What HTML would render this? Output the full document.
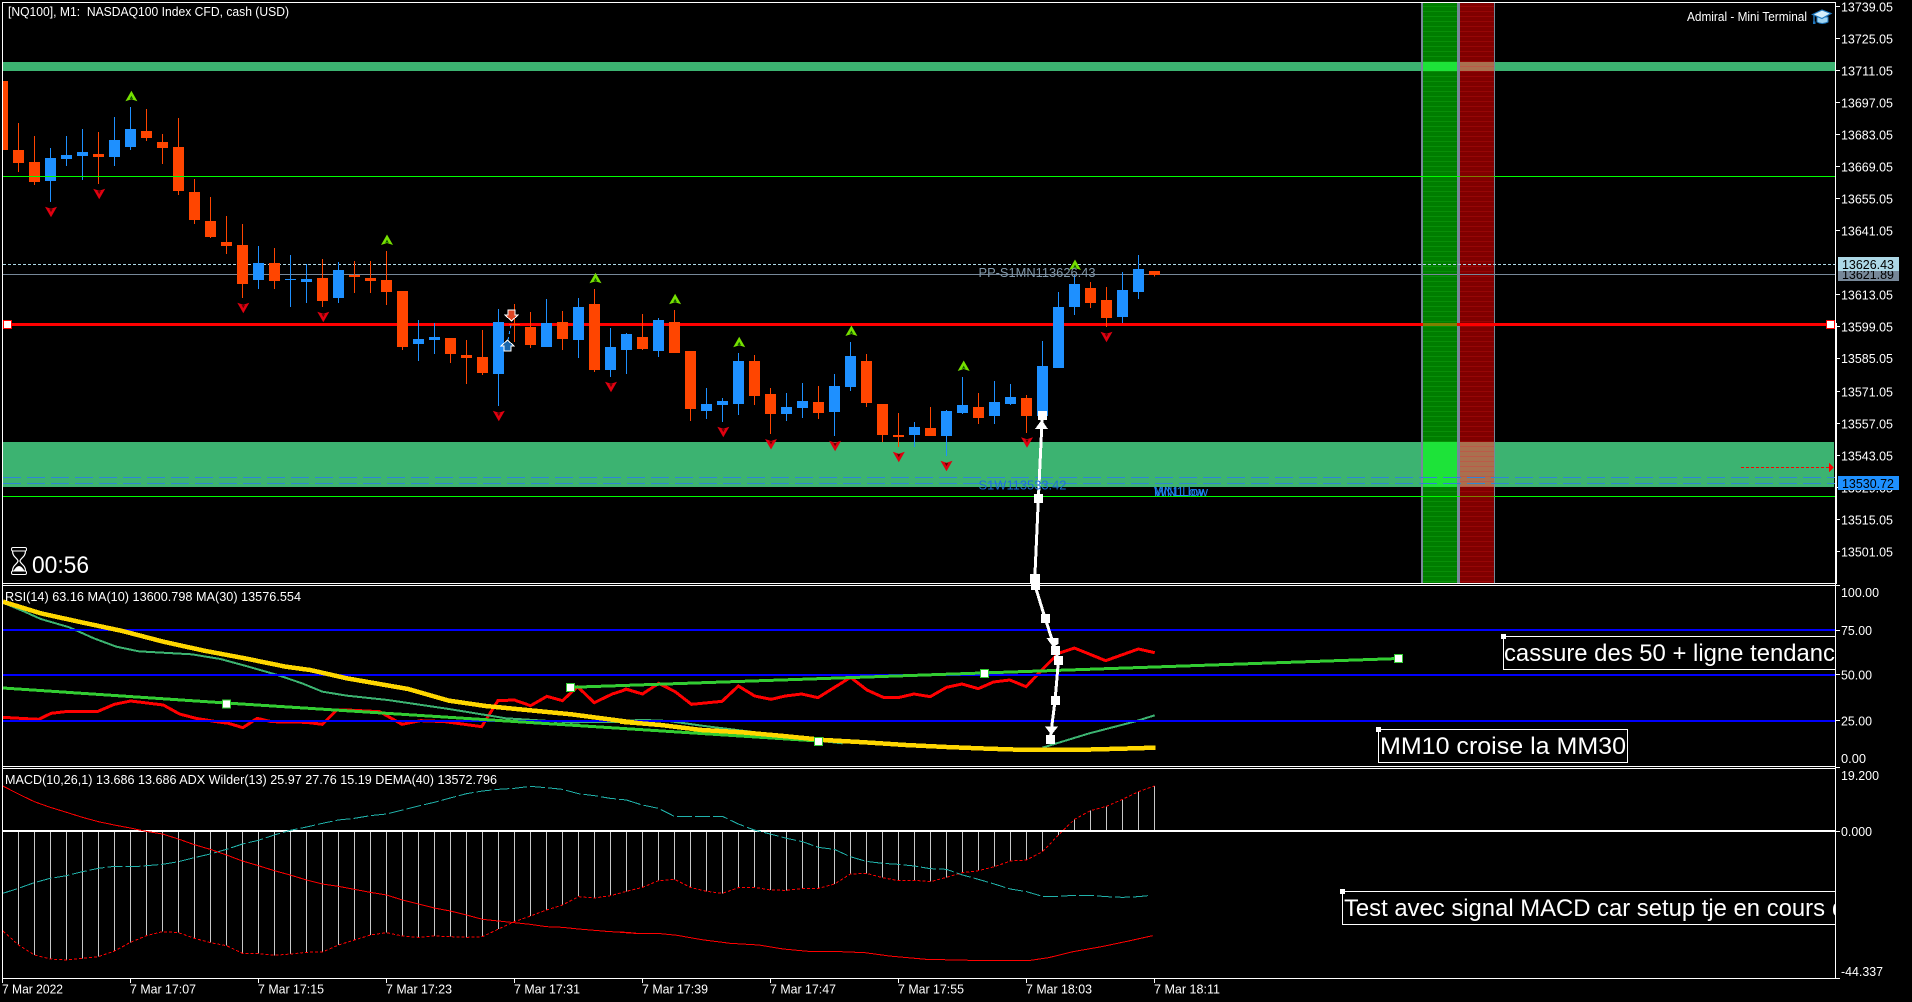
<!DOCTYPE html>
<html><head><meta charset="utf-8"><title>NQ100 M1</title>
<style>
html,body{margin:0;padding:0;background:#000;width:1912px;height:1002px;overflow:hidden}
svg{display:block;shape-rendering:crispEdges}
.n{vector-effect:non-scaling-stroke;fill:none}
text{font-family:"Liberation Sans",sans-serif;font-size:13px;fill:#fff;white-space:pre;shape-rendering:auto}
.b{font-size:24px}
</style></head><body>
<svg width="1912" height="1002" viewBox="0 0 1912 1002" xmlns="http://www.w3.org/2000/svg">
<defs>
<pattern id="gs" width="4" height="5" patternUnits="userSpaceOnUse"><rect width="4" height="5" fill="#007d00"/><rect y="1" width="4" height="1" fill="#089008"/></pattern>
<pattern id="rs" width="4" height="5" patternUnits="userSpaceOnUse"><rect width="4" height="5" fill="#800000"/><rect y="1" width="4" height="1" fill="#980606"/></pattern>
<pattern id="os" width="4" height="5" patternUnits="userSpaceOnUse"><rect width="4" height="5" fill="#a9704f"/><rect y="1" width="4" height="1" fill="#bb5a48"/></pattern>
<g id="u" style="shape-rendering:auto"><path d="M0-5.5L6 5L0 3L-6 5Z" fill="#76e000"/><path d="M0-.5L1.8 3L0 2.4L-1.8 3Z" fill="#0a5000"/></g>
<g id="d" style="shape-rendering:auto"><path d="M-6-5L0-3L6-5L0 5.5Z" fill="#e00010"/><path d="M-1.8-3L0-2.4L1.8-3L0 .5Z" fill="#5a0000"/></g>
<clipPath id="cl"><rect x="0" y="0" width="1835" height="1002"/></clipPath>
</defs>
<rect width="1912" height="1002" fill="#000"/>

<!-- bands -->
<rect x="3" y="62" width="1832" height="9" fill="#3cb371"/>
<rect x="3" y="442" width="1831" height="45" fill="#3cb371"/>
<rect x="1421" y="3" width="2" height="580" fill="#778899"/>
<rect x="1423" y="3" width="34" height="580" fill="url(#gs)"/>
<rect x="1457" y="3" width="3" height="580" fill="#778899"/>
<rect x="1460" y="3" width="34" height="580" fill="url(#rs)"/>
<rect x="1494" y="3" width="1" height="580" fill="#778899"/>
<rect x="1423" y="62" width="34" height="9" fill="#1de339"/>
<rect x="1460" y="62" width="34" height="9" fill="url(#os)"/>
<rect x="1423" y="442" width="34" height="45" fill="#1de339"/>
<rect x="1460" y="442" width="34" height="45" fill="url(#os)"/>

<!-- level lines -->
<path class="n" d="M3 477.5H1835M3 483.5H1835" stroke="#2f86d6" stroke-width="1" stroke-dasharray="18 6"/>
<path class="n" d="M3 264.5H1835" stroke="#add8e6" stroke-width="1" stroke-dasharray="3 2"/>
<rect x="3" y="274" width="1832" height="1" fill="#778899"/>
<rect x="3" y="323" width="1832" height="3" fill="#ff0000"/>
<rect x="1423" y="323" width="34" height="3" fill="#808000"/>

<!-- candles -->
<rect x="3" y="81" width="5" height="69" fill="#ff4500"/>
<g transform="scale(1 .33333)">
<path class="n" stroke="#ff4500" stroke-width="1" d="M18.5 369V516M34.5 408V555M98.5 396V552M146.5 327V423M162.5 402V492M178.5 354V585M194.5 537V672M210.5 591V714M226.5 648V762M242.5 672V894M274.5 744V867M322.5 777V921M354.5 783V879M370.5 783V879M386.5 753V915"/>
<path class="n" stroke="#ff4500" stroke-width="11" d="M18.5 450V489M34.5 486V546M98.5 462V471M146.5 393V414M162.5 426V444M178.5 441V573M194.5 576V660M210.5 663V711M226.5 726V738M242.5 735V852M274.5 789V843M322.5 834V903M354.5 825V831M370.5 834V843M386.5 840V876"/>
<path class="n" stroke="#1e90ff" stroke-width="1" d="M50.5 444V606M66.5 408V498M82.5 387V540M114.5 351V498M130.5 321V450M258.5 738V867M290.5 765V921M306.5 792V909M338.5 786V909"/>
<path class="n" stroke="#1e90ff" stroke-width="11" d="M50.5 474V543M66.5 465V477M82.5 456V468M114.5 420V471M130.5 387V441M258.5 789V840M290.5 837V840M306.5 837V846M338.5 810V894"/>
</g>
<g transform="translate(0 240) scale(1 .33333)">
<path class="n" stroke="#ff4500" stroke-width="1" d="M402.5 153V330M450.5 294V369M466.5 300V432M482.5 270V405M514.5 192V306M530.5 216V324M562.5 213V330M594.5 147V396M642.5 222V330M674.5 210V339M690.5 333V543M754.5 345V495M770.5 444V582M818.5 438V537M866.5 342V501M882.5 492V606M898.5 519V621M930.5 501V588M978.5 459V552M1026.5 465V579M1090.5 126V204M1106.5 141V261M1154.5 93V110"/>
<path class="n" stroke="#ff4500" stroke-width="11" d="M402.5 153V321M450.5 294V342M466.5 345V354M482.5 351V399M514.5 252V255M530.5 261V315M562.5 246V297M594.5 192V390M642.5 291V327M674.5 246V339M690.5 333V507M754.5 363V468M770.5 462V522M818.5 486V519M866.5 363V489M882.5 492V585M898.5 585V591M930.5 564V588M978.5 501V534M1026.5 474V528M1090.5 144V189M1106.5 180V234M1154.5 93V105"/>
<path class="n" stroke="#1e90ff" stroke-width="1" d="M418.5 240V363M434.5 249V342M498.5 207V498M546.5 177V321M578.5 174V354M610.5 264V411M626.5 279V402M658.5 234V351M706.5 444V537M722.5 474V546M738.5 339V525M786.5 459V543M802.5 429V534M834.5 402V588M850.5 306V453M914.5 546V621M946.5 510V648M962.5 411V522M994.5 423V552M1010.5 432V495M1042.5 303V530M1058.5 156V384M1074.5 105V225M1122.5 96V249M1138.5 45V177"/>
<path class="n" stroke="#1e90ff" stroke-width="11" d="M418.5 297V312M434.5 291V300M498.5 246V402M546.5 249V321M578.5 201V300M610.5 321V390M626.5 282V330M658.5 240V333M706.5 492V513M722.5 483V495M738.5 363V492M786.5 501V522M802.5 483V504M834.5 438V516M850.5 348V441M914.5 561V585M946.5 513V588M962.5 495V519M994.5 486V528M1010.5 471V492M1042.5 378V528M1058.5 201V384M1074.5 132V201M1122.5 150V231M1138.5 87V156"/>
</g>

<!-- lime lines -->
<rect x="3" y="176" width="1832" height="1" fill="#00ff00"/>
<rect x="3" y="496" width="1832" height="1" fill="#00ff00"/>
<rect x="1460" y="176" width="34" height="1" fill="#807f00"/>
<rect x="1460" y="496" width="34" height="1" fill="#807f00"/>

<!-- markers -->
<use href="#u" x="131.4" y="96.3"/><use href="#u" x="387" y="240"/><use href="#u" x="595.5" y="278.3"/><use href="#u" x="675.1" y="299.3"/><use href="#u" x="739.2" y="342.3"/><use href="#u" x="851.4" y="331"/><use href="#u" x="963.7" y="366"/><use href="#u" x="1075" y="265"/>
<use href="#d" x="51" y="211.7"/><use href="#d" x="99.2" y="193.7"/><use href="#d" x="243.3" y="307.7"/><use href="#d" x="323.3" y="316.7"/><use href="#d" x="498.8" y="415.7"/><use href="#d" x="611" y="386.7"/><use href="#d" x="723.3" y="431.7"/><use href="#d" x="771" y="444"/><use href="#d" x="835.1" y="445.7"/><use href="#d" x="898.8" y="456.7"/><use href="#d" x="946.5" y="465.7"/><use href="#d" x="1027" y="442.3"/><use href="#d" x="1106.5" y="336.7"/>
<path d="M508 310H515V315H518L511.5 321L505 315H508Z" fill="#dd4422" stroke="#fff" stroke-width="1"/>
<path d="M504 351H511V346H514L507.5 340L501 346H504Z" fill="#1a66aa" stroke="#fff" stroke-width="1"/>
<path class="n" d="M508 340L511 325" stroke="#1e90ff" stroke-width="1" stroke-dasharray="3 3"/>
<path class="n" d="M1741 467.5H1830" stroke="#ff0000" stroke-width="1" stroke-dasharray="3 2"/>
<path d="M1829 463L1834 467.5L1829 472Z" fill="#ff0000"/>

<!-- red line handles -->
<rect x="3" y="320" width="9" height="9" fill="#ff0000"/><rect x="4" y="321" width="7" height="7" fill="#fff"/>
<rect x="1826" y="320" width="9" height="9" fill="#ff0000"/><rect x="1827" y="321" width="7" height="7" fill="#fff"/>

<!-- RSI -->
<g transform="translate(0 570) scale(.40816 .33333)">
<polyline class="n" stroke="#ff0000" stroke-width="3" points="7,442 50,445 95,448 125,430 160,425 240,424 280,403 320,393 400,405 440,432 480,445 530,455 560,460 595,473 630,445 665,455 750,457 790,463 825,420 850,420 930,425 985,463 1030,452 1090,455 1180,470 1220,392 1260,390 1300,407 1340,379 1378,392 1415,350 1456,398 1500,372 1535,358 1568,370"/>
<polyline class="n" stroke="#3cb371" stroke-width="2" points="7,98 60,125 100,147 170,172 230,205 285,230 340,244 470,253 540,267 600,287 680,315 740,340 790,365 850,377 950,390 1100,417 1240,445 1400,457 1568,455"/>
</g>
<g transform="translate(620 570) scale(.40816 .33333)">
<polyline class="n" stroke="#ff0000" stroke-width="3" points="0,365 15,357 55,372 95,340 135,365 175,403 250,394 290,348 330,378 370,388 405,378 445,372 485,383 565,322 605,360 645,382 685,382 720,372 760,380 800,352 838,342 878,356 915,336 955,330 995,350 1035,298 1074,250 1113,234 1190,272 1270,237 1310,248"/>
<polyline class="n" stroke="#3cb371" stroke-width="2" points="0,452 60,450 120,453 200,467 300,482 400,497 470,510 545,520"/>
<polyline class="n" stroke="#3cb371" stroke-width="2" points="1035,533 1150,490 1260,455 1310,436"/>
</g>
<rect x="3" y="629" width="1832" height="2" fill="#0000ff"/>
<rect x="3" y="674" width="1832" height="2" fill="#0000ff"/>
<rect x="3" y="720" width="1832" height="2" fill="#0000ff"/>
<path class="n" d="M3 688L226 703L818 741" stroke="#32cd32" stroke-width="3"/>
<path class="n" d="M571 687.3L1399 658.5" stroke="#32cd32" stroke-width="3"/>
<g transform="translate(0 570) scale(.40816 .33333)">
<polyline class="n" stroke="#ffd700" stroke-width="4.5" points="7,95 100,130 200,157 300,183 400,215 500,242 600,265 700,290 760,300 850,325 1000,357 1100,392 1190,408 1400,433 1568,460"/>
</g>
<g transform="translate(620 570) scale(.40816 .33333)">
<polyline class="n" stroke="#ffd700" stroke-width="4.5" points="0,455 100,465 200,480 300,487 400,498 500,510 600,517 700,525 800,531 900,536 1000,540 1110,540 1230,536 1312,533"/>
</g>
<g fill="#fff" stroke="#32cd32" stroke-width="1">
<rect x="222.5" y="700" width="8" height="8"/><rect x="814.5" y="737.5" width="8" height="8"/><rect x="566.5" y="683.5" width="8" height="8"/><rect x="980.5" y="669.5" width="8" height="8"/><rect x="1394.5" y="654.5" width="8" height="8"/>
</g>

<!-- MACD -->
<g transform="translate(0 770) scale(1 .33333)">
<path class="n" stroke="#c8c8c8" stroke-width="1" d="M18.5 182V525M34.5 182V555M50.5 182V567M66.5 182V570M82.5 182V565M98.5 182V560M114.5 182V543M130.5 182V517M146.5 182V497M162.5 182V485M178.5 182V488M194.5 182V505M210.5 182V518M226.5 182V527M242.5 182V550M258.5 182V551M274.5 182V556M290.5 182V552M306.5 182V547M322.5 182V546M338.5 182V525M354.5 182V510M370.5 182V495M386.5 182V488M402.5 182V498M418.5 182V502M434.5 182V498M450.5 182V500M466.5 182V502M482.5 182V500M498.5 182V477M514.5 182V455M530.5 182V438M546.5 182V420M562.5 182V405M578.5 182V380M594.5 182V384M610.5 182V377M626.5 182V364M642.5 182V352M658.5 182V332M674.5 182V328M690.5 182V352M706.5 182V364M722.5 182V370M738.5 182V353M754.5 182V352M770.5 182V360M786.5 182V361M802.5 182V356M818.5 182V355M834.5 182V342M850.5 182V312M866.5 182V310M882.5 182V323M898.5 182V332M914.5 182V331M930.5 182V335M946.5 182V322M962.5 182V308M978.5 182V302M994.5 182V290M1010.5 182V273M1026.5 182V270M1042.5 182V245M1058.5 182V195M1074.5 182V148M1090.5 182V122M1106.5 182V109M1122.5 182V88M1138.5 182V65M1154.5 182V48"/>
<polyline class="n" stroke="#ff0000" stroke-width="1" stroke-dasharray="3 2" points="3,483 18.5,525 34.5,555 50.5,567 66.5,570 82.5,565 98.5,560 114.5,543 130.5,517 146.5,497 162.5,485 178.5,488 194.5,505 210.5,518 226.5,527 242.5,550 258.5,551 274.5,556 290.5,552 306.5,547 322.5,546 338.5,525 354.5,510 370.5,495 386.5,488 402.5,498 418.5,502 434.5,498 450.5,500 466.5,502 482.5,500 498.5,477 514.5,455 530.5,438 546.5,420 562.5,405 578.5,380 594.5,384 610.5,377 626.5,364 642.5,352 658.5,332 674.5,328 690.5,352 706.5,364 722.5,370 738.5,353 754.5,352 770.5,360 786.5,361 802.5,356 818.5,355 834.5,342 850.5,312 866.5,310 882.5,323 898.5,332 914.5,331 930.5,335 946.5,322 962.5,308 978.5,302 994.5,290 1010.5,273 1026.5,270 1042.5,245 1058.5,195 1074.5,148 1090.5,122 1106.5,109 1122.5,88 1138.5,65 1154.5,48"/>
</g>
<rect x="3" y="830" width="1832" height="2" fill="#fff"/>
<g transform="translate(0 770) scale(.40816 .33333)">
<polyline class="n" stroke="#20b2aa" stroke-width="1" stroke-dasharray="15 3" points="7,370 45,355 84,338 123,325 163,317 202,305 241,295 280,289 340,289 398,283 437,275 476,263 515,252 555,238 594,222 633,211 672,195 711,181 751,171 790,160 829,150 868,145 907,137 947,132 986,120 1025,108 1064,97 1103,84 1143,71 1182,63 1221,58 1260,55 1299,49 1338,53 1378,58 1417,71 1456,77 1495,85 1535,90 1568,103"/>
<polyline class="n" stroke="#ff0000" stroke-width="1" points="7,48 45,72 84,95 123,112 163,127 202,142 241,155 280,165 319,174 358,184 398,192 437,207 476,224 515,238 555,255 594,273 633,287 672,302 711,315 751,330 790,342 829,349 868,358 907,367 947,375 986,390 1025,402 1064,414 1103,423 1143,435 1182,448 1221,453 1260,458 1299,463 1338,470 1378,472 1417,477 1456,481 1495,485 1535,487 1568,491"/>
</g>
<g transform="translate(620 770) scale(.40816 .33333)">
<polyline class="n" stroke="#20b2aa" stroke-width="1" stroke-dasharray="15 3" points="15,90 55,105 94,115 133,139 172,139 212,139 251,139 290,162 329,180 368,192 408,205 447,215 486,232 525,238 564,260 603,274 643,280 682,283 721,288 760,296 800,298 839,315 878,328 917,342 956,357 996,365 1035,379 1074,379 1113,376 1152,376 1192,380 1231,382 1270,380 1293,377"/>
<polyline class="n" stroke="#ff0000" stroke-width="1" points="0,487 36,490 100,491 140,496 200,509 270,520 340,525 400,537 470,545 540,545 600,548 660,558 750,568 860,571 935,571 1000,572 1050,563 1110,545 1180,530 1250,512 1305,497"/>
</g>

<!-- frame -->
<rect x="2" y="2" width="1834" height="1" fill="#fff"/>
<rect x="2" y="2" width="1" height="977" fill="#fff"/>
<rect x="1835" y="2" width="1" height="977" fill="#fff"/>
<rect x="1835" y="323" width="2" height="261" fill="#fff"/>
<rect x="2" y="583" width="1834" height="1" fill="#fff"/>
<rect x="2" y="585" width="1834" height="1" fill="#fff"/>
<rect x="2" y="766" width="1834" height="1" fill="#fff"/>
<rect x="2" y="768" width="1834" height="1" fill="#fff"/>
<rect x="2" y="978" width="1834" height="1" fill="#fff"/>
<path class="n" stroke="#fff" stroke-width="1" d="M1836 6.5h4M1836 38.5h4M1836 70.5h4M1836 102.5h4M1836 134.5h4M1836 166.5h4M1836 198.5h4M1836 230.5h4M1836 294.5h4M1836 326.5h4M1836 358.5h4M1836 391.5h4M1836 423.5h4M1836 455.5h4M1836 487.5h4M1836 519.5h4M1836 551.5h4M1836 585.5h4M1836 630.5h4M1836 674.5h4M1836 720.5h4M1836 767.5h4M1836 831.5h4M1836 978.5h4M2.5 979v4M130.5 979v4M258.5 979v4M386.5 979v4M514.5 979v4M642.5 979v4M770.5 979v4M898.5 979v4M1026.5 979v4M1154.5 979v4"/>

<!-- freehand arrow -->
<polyline class="n" stroke="#fff" stroke-width="3" points="1042.4,413 1038.4,498 1034.7,580 1035.5,587 1045.3,619 1055.5,650 1058.4,661 1055.1,700 1050.2,739"/>
<g fill="#fff">
<rect x="1038" y="411" width="9" height="9"/><rect x="1034" y="494" width="9" height="9"/><rect x="1030" y="574" width="10" height="9"/><rect x="1031" y="584" width="9" height="6"/><rect x="1041" y="614" width="9" height="9"/><rect x="1051" y="646" width="9" height="9"/><rect x="1054" y="656" width="9" height="9"/><rect x="1051" y="696" width="9" height="9"/><rect x="1046" y="735" width="9" height="9"/>
<path d="M1041.6 420L1048 429H1035Z"/>
<path d="M1046.5 638H1058.5V644L1053 647Z"/>
<path d="M1045 726.5H1058L1051.5 735Z"/>
</g>

<!-- chart labels -->
<text x="978.5" y="277" textLength="117" lengthAdjust="spacingAndGlyphs" style="fill:#8197a8">PP-S1MN113626.43</text>
<text x="978.5" y="489.5" textLength="88" lengthAdjust="spacingAndGlyphs" style="fill:#1e6fd8">S1W113533.42</text>
<text x="1154" y="496" textLength="50" lengthAdjust="spacingAndGlyphs" style="fill:#1e80f0">MN1 Low</text>
<text x="1154" y="496" textLength="54" lengthAdjust="spacingAndGlyphs" style="fill:#1e80f0">WN1 low</text>

<!-- header / indicator text -->
<text x="8" y="16" textLength="281" lengthAdjust="spacingAndGlyphs">[NQ100], M1:  NASDAQ100 Index CFD, cash (USD)</text>
<text x="1687" y="21" textLength="120" lengthAdjust="spacingAndGlyphs">Admiral - Mini Terminal</text>
<text x="5" y="601" textLength="296" lengthAdjust="spacingAndGlyphs">RSI(14) 63.16 MA(10) 13600.798 MA(30) 13576.554</text>
<text x="5" y="784" textLength="492" lengthAdjust="spacingAndGlyphs">MACD(10,26,1) 13.686 13.686 ADX Wilder(13) 25.97 27.76 15.19 DEMA(40) 13572.796</text>

<!-- graduate cap icon -->
<g style="shape-rendering:auto">
<path d="M1817 17V22Q1822 25 1828 22V17Z" fill="#9fd4f2" stroke="#1f78c0" stroke-width="1"/>
<path d="M1812.5 14.5L1822 10L1831 13.5L1822 18.5Z" fill="#d5eefb" stroke="#1f78c0" stroke-width="1.2"/>
<path d="M1814 15V22" stroke="#1f78c0" stroke-width="1.4" fill="none"/>
<rect x="1813" y="21.5" width="2.5" height="2.5" fill="#1f78c0"/>
</g>

<!-- timer -->
<g style="shape-rendering:auto">
<rect x="11.5" y="547.5" width="15" height="3.5" rx="1.5" fill="none" stroke="#fff"/>
<rect x="11.5" y="571" width="15" height="3.5" rx="1.5" fill="none" stroke="#fff"/>
<path d="M12.5 551C12.5 557 17.5 558 18 561C17.5 564 12.5 565 12.5 571M25.5 551C25.5 557 20.5 558 20 561C20.5 564 25.5 565 25.5 571" fill="none" stroke="#fff" stroke-width="1.2"/>
<path d="M13.5 571Q19 561 24.5 571Z" fill="#fff"/>
</g>
<text class="b" x="32" y="573" textLength="57" lengthAdjust="spacingAndGlyphs">00:56</text>

<!-- text boxes -->
<g clip-path="url(#cl)">
<path class="n" stroke="#fff" stroke-width="1" d="M1836 636.5H1503.5V669.5H1836"/>
<text class="b" x="1504" y="661" textLength="331" lengthAdjust="spacingAndGlyphs">cassure des 50 + ligne tendanc</text>
<path class="n" stroke="#fff" stroke-width="1" d="M1836 891.5H1342.5V924.5H1836"/>
<text class="b" x="1344" y="916" textLength="481" lengthAdjust="spacingAndGlyphs">Test avec signal MACD car setup tje en cours</text>
<text class="b" x="1832" y="916">d</text>
</g>
<path class="n" stroke="#fff" stroke-width="1" fill="none" d="M1378.5 729.5H1627.5V762.5H1378.5Z"/>
<text class="b" x="1380" y="754" textLength="246" lengthAdjust="spacingAndGlyphs">MM10 croise la MM30</text>
<rect x="1501" y="634" width="5" height="5" fill="#fff"/>
<rect x="1376" y="727" width="5" height="5" fill="#fff"/>
<rect x="1340" y="889" width="5" height="5" fill="#fff"/>

<!-- price axis -->
<g>
<text x="1841" y="11.5" textLength="52" lengthAdjust="spacingAndGlyphs">13739.05</text>
<text x="1841" y="43.5" textLength="52" lengthAdjust="spacingAndGlyphs">13725.05</text>
<text x="1841" y="75.5" textLength="52" lengthAdjust="spacingAndGlyphs">13711.05</text>
<text x="1841" y="107.5" textLength="52" lengthAdjust="spacingAndGlyphs">13697.05</text>
<text x="1841" y="139.5" textLength="52" lengthAdjust="spacingAndGlyphs">13683.05</text>
<text x="1841" y="171.5" textLength="52" lengthAdjust="spacingAndGlyphs">13669.05</text>
<text x="1841" y="203.5" textLength="52" lengthAdjust="spacingAndGlyphs">13655.05</text>
<text x="1841" y="235.5" textLength="52" lengthAdjust="spacingAndGlyphs">13641.05</text>
<text x="1841" y="299.5" textLength="52" lengthAdjust="spacingAndGlyphs">13613.05</text>
<text x="1841" y="331.5" textLength="52" lengthAdjust="spacingAndGlyphs">13599.05</text>
<text x="1841" y="363" textLength="52" lengthAdjust="spacingAndGlyphs">13585.05</text>
<text x="1841" y="396.5" textLength="52" lengthAdjust="spacingAndGlyphs">13571.05</text>
<text x="1841" y="428.5" textLength="52" lengthAdjust="spacingAndGlyphs">13557.05</text>
<text x="1841" y="460.5" textLength="52" lengthAdjust="spacingAndGlyphs">13543.05</text>
<text x="1841" y="492.5" textLength="52" lengthAdjust="spacingAndGlyphs">13529.05</text>
<text x="1841" y="524.5" textLength="52" lengthAdjust="spacingAndGlyphs">13515.05</text>
<text x="1841" y="556.5" textLength="52" lengthAdjust="spacingAndGlyphs">13501.05</text>
<rect x="1838" y="267" width="61" height="14" fill="#778899"/>
<text x="1842" y="279" textLength="52" lengthAdjust="spacingAndGlyphs" style="fill:#000">13621.89</text>
<rect x="1838" y="257" width="61" height="14" fill="#add8e6"/>
<text x="1842" y="269" textLength="52" lengthAdjust="spacingAndGlyphs" style="fill:#000">13626.43</text>
<rect x="1838" y="476" width="61" height="14" fill="#1e90ff"/>
<text x="1842" y="488" textLength="52" lengthAdjust="spacingAndGlyphs" style="fill:#000">13530.72</text>
<text x="1841" y="597" textLength="38" lengthAdjust="spacingAndGlyphs">100.00</text>
<text x="1841" y="635" textLength="31" lengthAdjust="spacingAndGlyphs">75.00</text>
<text x="1841" y="679.5" textLength="31" lengthAdjust="spacingAndGlyphs">50.00</text>
<text x="1841" y="725.5" textLength="31" lengthAdjust="spacingAndGlyphs">25.00</text>
<text x="1841" y="763" textLength="25" lengthAdjust="spacingAndGlyphs">0.00</text>
<text x="1841" y="780" textLength="38" lengthAdjust="spacingAndGlyphs">19.200</text>
<text x="1841" y="836" textLength="31" lengthAdjust="spacingAndGlyphs">0.000</text>
<text x="1841" y="976" textLength="42" lengthAdjust="spacingAndGlyphs">-44.337</text>
</g>

<!-- time axis -->
<g>
<text x="2" y="993.5" textLength="61" lengthAdjust="spacingAndGlyphs">7 Mar 2022</text>
<text x="130" y="993.5" textLength="66" lengthAdjust="spacingAndGlyphs">7 Mar 17:07</text>
<text x="258" y="993.5" textLength="66" lengthAdjust="spacingAndGlyphs">7 Mar 17:15</text>
<text x="386" y="993.5" textLength="66" lengthAdjust="spacingAndGlyphs">7 Mar 17:23</text>
<text x="514" y="993.5" textLength="66" lengthAdjust="spacingAndGlyphs">7 Mar 17:31</text>
<text x="642" y="993.5" textLength="66" lengthAdjust="spacingAndGlyphs">7 Mar 17:39</text>
<text x="770" y="993.5" textLength="66" lengthAdjust="spacingAndGlyphs">7 Mar 17:47</text>
<text x="898" y="993.5" textLength="66" lengthAdjust="spacingAndGlyphs">7 Mar 17:55</text>
<text x="1026" y="993.5" textLength="66" lengthAdjust="spacingAndGlyphs">7 Mar 18:03</text>
<text x="1154" y="993.5" textLength="66" lengthAdjust="spacingAndGlyphs">7 Mar 18:11</text>
</g>
</svg>
</body></html>
